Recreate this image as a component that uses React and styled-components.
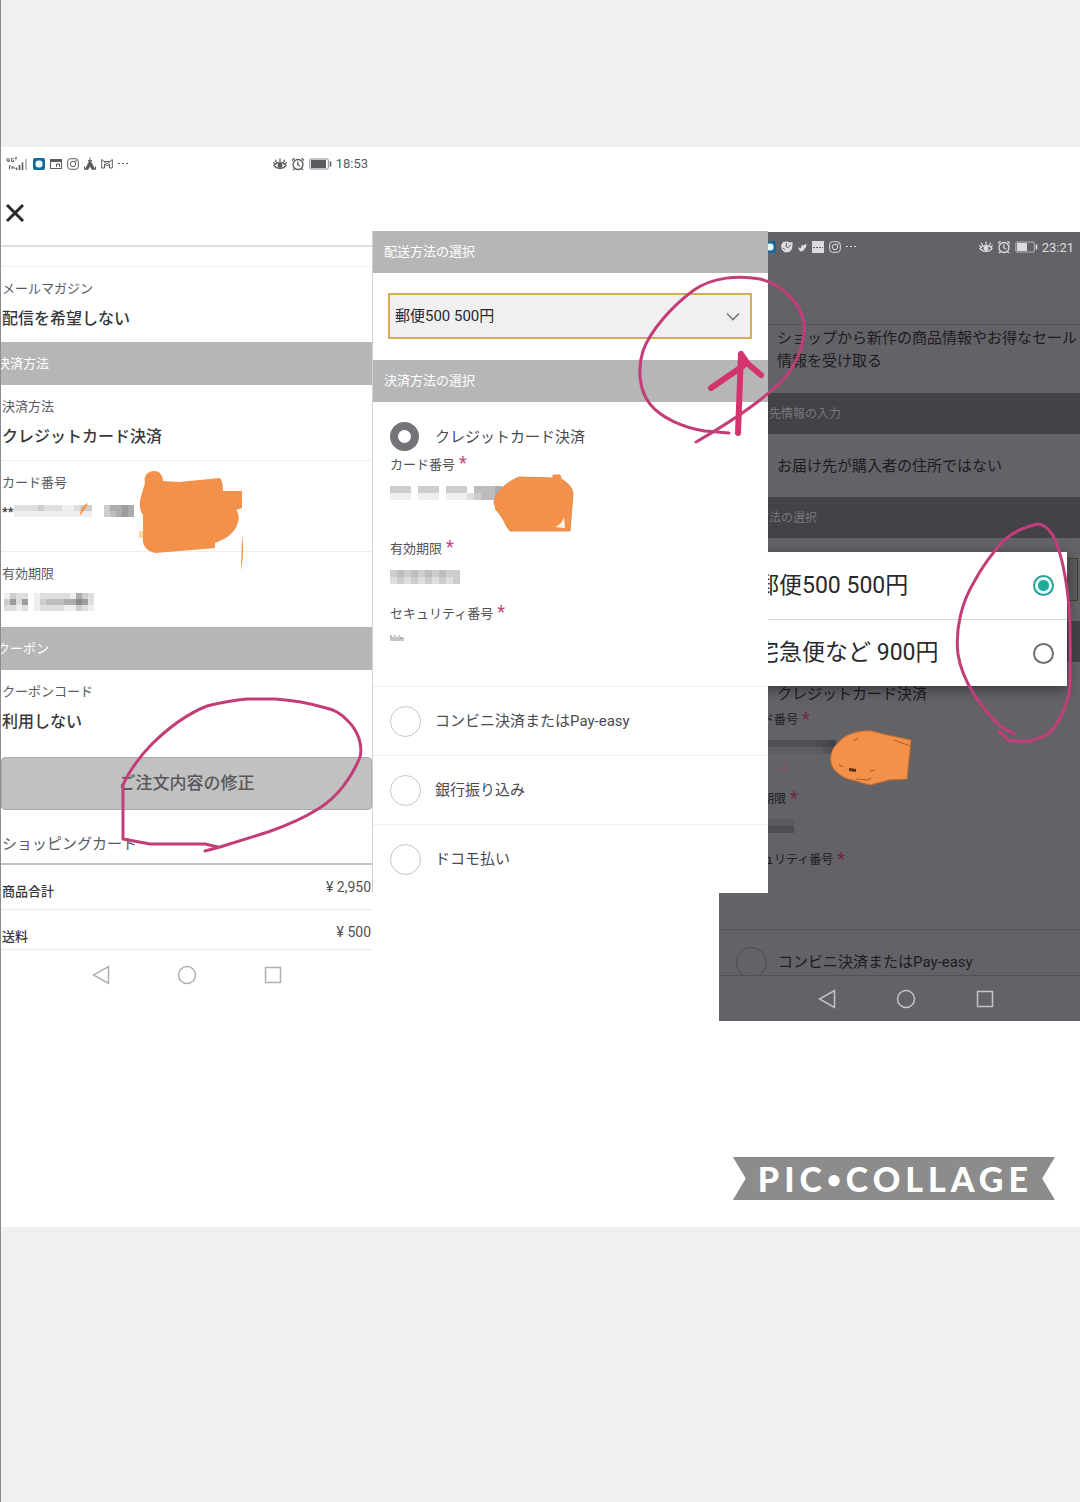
import React from "react"
import styled, { createGlobalStyle } from 'styled-components';


const GlobalStyle = createGlobalStyle`
    * {
        box-sizing: border-box;
    }

    body {
        margin: 0;
        background: #f0f0f0;
        color: #38383c;
        font-family: Roboto, "Noto Sans CJK JP", sans-serif;
    }

    button, select, input {
        margin: 0;
        padding: 0;
        font-family: inherit;
        color: inherit;
    }
`

// each row is a string of darkness levels, 0 = empty
const Mosaic = ({ rows, cell = 7, dark }) => (
    <MosaicStyles
        width={rows[0].length * cell}
        height={rows.length * cell}
        shapeRendering="crispEdges"
        aria-hidden="true"
    >
        {rows.map((row, y) => row.split('').map((level, x) => (
            <rect
                key={`${x}-${y}`}
                x={x * cell}
                y={y * cell}
                width={cell}
                height={cell}
                fill={dark ? '#38373c' : '#5a5a5e'}
                opacity={Number(level) / 10}
            />
        )))}
    </MosaicStyles>
)

const EyeIcon = () => (
    <svg width="14" height="14" viewBox="0 0 15 14" fill="none" stroke="currentColor" strokeWidth="1.3">
        <path d="M1 8.5C4 4.5 11 4.5 14 8.5C11 12.800 4 12.800 1 8.500Z" />
        <circle cx="7.500" cy="8.500" r="2" fill="currentColor" />
        <path d="M7.500 5V1M4 5.600L2.500 2.500M11 5.600L12.500 2.500M1.800 7L.5 5M13.200 7L14.500 5" />
    </svg>
)

const AlarmIcon = () => (
    <svg width="14" height="14" viewBox="0 0 14 14" fill="none" stroke="currentColor" strokeWidth="1.3">
        <circle cx="7" cy="7.500" r="5" />
        <path d="M6.800 4.500V7.700L9.200 9M1 3.500L3.500 1.200M13 3.500L10.500 1.200M3.500 11.500L2 13M10.500 11.500L12 13" />
    </svg>
)

const BatteryIcon = ({ level }) => (
    <svg width="23" height="12" viewBox="0 0 23 12" fill="none" stroke="currentColor">
        <rect x=".8" y="1" width="18.500" height="10" rx="1" opacity=".7" />
        <rect x="2" y="2" width={level} height="8" fill="currentColor" stroke="none" />
        <path d="M21.500 3.500V8.500" strokeWidth="1.600" />
    </svg>
)

const SignalIcon = () => (
    <svg width="22" height="14" viewBox="0 0 22 14" fill="none" stroke="currentColor">
        <path d="M1 1V4H3.500M3 1V5M7.500 1.500H5.500V4.500H7.500V3M9 1H11M10 0V2.500" />
        <path d="M3.500 9V12M3 9H5M6 9.500V12M6 10H8V12" />
        <path d="M10.500 13V10.500M13.500 13V8M16.500 13V5.500" strokeWidth="1.600" />
        <path d="M20 13V2" strokeWidth="1.600" opacity=".5" />
    </svg>
)

const BlueAppIcon = () => (
    <svg width="12" height="12" viewBox="0 0 12 12">
        <rect width="12" height="12" rx="2" fill="#17699c" />
        <rect x="2.500" y="2.500" width="7" height="7" rx="3" fill="#e8fbff" />
    </svg>
)

const WindowIcon = () => (
    <svg width="12" height="12" viewBox="0 0 12 12" fill="none" stroke="currentColor">
        <rect x=".5" y="1.500" width="11" height="9" />
        <path d="M.5 3H11.500" strokeWidth="2" />
        <path d="M6.500 9V6H9.500V9" />
    </svg>
)

const CameraIcon = () => (
    <svg width="12" height="12" viewBox="0 0 12 12" fill="none" stroke="currentColor">
        <rect x=".7" y=".7" width="10.600" height="10.600" rx="3" />
        <circle cx="6" cy="6" r="2.700" />
        <circle cx="9" cy="3" r=".4" />
    </svg>
)

const TentIcon = () => (
    <svg width="12" height="14" viewBox="0 0 12 14" fill="none" stroke="currentColor">
        <path d="M6 3L11 12.500H8L6 9L4 12.500H1Z" fill="currentColor" strokeWidth=".6" />
        <path d="M6 5V.5M4 3L6 5L8 3M.5 9.500V12.500M11.500 9.500V12.500" />
    </svg>
)

const MailIcon = () => (
    <svg width="12" height="11" viewBox="0 0 12 11" fill="none" stroke="currentColor">
        <path d="M.7 10V1.500L6 6L11.300 1.500V10H8.500V6L6 8L3.500 6V10Z" />
        <path d="M3 3.500H9" />
    </svg>
)

const MoreIcon = () => (
    <svg width="10" height="4" viewBox="0 0 10 4" fill="currentColor">
        <rect x="0" y="1" width="2" height="1" />
        <rect x="4" y="1" width="2" height="1" />
        <rect x="8" y="1" width="2" height="1" />
    </svg>
)

const BallIcon = () => (
    <svg width="12" height="12" viewBox="0 0 12 12">
        <path d="M2 1L6 .5L9 1.500L11.500 1V4L11 8L8.500 11L4 11.500L1 9L0 4.500Z" fill="currentColor" />
        <path d="M5.500 2L5 5.500L7 6.500L10 4M2 7L4 8.500" stroke="#636267" fill="none" />
    </svg>
)

const BirdIcon = () => (
    <svg width="9" height="9" viewBox="0 0 9 9">
        <path d="M0 4.500L3 5L4 1.500L5.500 2.500L8.500 .5L8 4L5 8L2 8.500Z" fill="currentColor" />
    </svg>
)

const CardIcon = () => (
    <svg width="12" height="12" viewBox="0 0 12 12">
        <rect width="12" height="12" fill="currentColor" />
        <path d="M1 6.500H11" stroke="#636267" strokeDasharray="2 1" />
    </svg>
)

const SystemNav = ({ dark }) => (
    <NavStyles $dark={dark} aria-label="system">
        <NavButton type="button" aria-label="back">
            <svg width="18" height="20" viewBox="0 0 18 20"><path d="M16.500 1.500V18.500L1.500 10Z" /></svg>
        </NavButton>
        <NavButton type="button" aria-label="home">
            <svg width="20" height="20" viewBox="0 0 20 20"><circle cx="10" cy="10" r="8.500" /></svg>
        </NavButton>
        <NavButton type="button" aria-label="recent">
            <svg width="18" height="18" viewBox="0 0 18 18"><rect x="1.500" y="1.500" width="15" height="15" /></svg>
        </NavButton>
    </NavStyles>
)

const ConfirmScreen = () => (
    <ConfirmStyles>
        <StatusBar>
            <StatusIcons>
                <SignalIcon />
                <BlueAppIcon />
                <WindowIcon />
                <CameraIcon />
                <TentIcon />
                <MailIcon />
                <MoreIcon />
            </StatusIcons>
            <StatusIcons $tight>
                <EyeIcon />
                <AlarmIcon />
                <BatteryIcon level={15} />
                <Clock>18:53</Clock>
            </StatusIcons>
        </StatusBar>
        <CloseBar>
            <CloseButton type="button" aria-label="close">
                <svg width="20" height="20" viewBox="0 0 20 20" fill="none" stroke="#29292d" strokeWidth="3">
                    <path d="M2 2L18 18M18 2L2 18" />
                </svg>
            </CloseButton>
        </CloseBar>
        <Spacer />
        <SummaryRow>
            <SummaryLabel>メールマガジン</SummaryLabel>
            <SummaryValue>配信を希望しない</SummaryValue>
        </SummaryRow>
        <SectionTitle $cropped>決済方法</SectionTitle>
        <SummaryRow $line>
            <SummaryLabel>決済方法</SummaryLabel>
            <SummaryValue>クレジットカード決済</SummaryValue>
        </SummaryRow>
        <SummaryRow $line $tall>
            <SummaryLabel>カード番号</SummaryLabel>
            <SummaryValue>
                <Stars>**</Stars>
                <Mosaic rows={["22223222112330035565", "11111111111110034565"]} cell={6} />
            </SummaryValue>
        </SummaryRow>
        <SummaryRow>
            <SummaryLabel>有効期限</SummaryLabel>
            <SummaryValue>
                <MosaicInset>
                    <Mosaic rows={["132201222221532", "362601344455762", "221201222211321"]} cell={6} />
                </MosaicInset>
            </SummaryValue>
        </SummaryRow>
        <SectionTitle $cropped>クーポン</SectionTitle>
        <SummaryRow>
            <SummaryLabel>クーポンコード</SummaryLabel>
            <SummaryValue>利用しない</SummaryValue>
        </SummaryRow>
        <EditButton type="button">ご注文内容の修正</EditButton>
        <CartTitle>ショッピングカート</CartTitle>
        <TotalTable>
            <tbody>
                <tr>
                    <th scope="row">商品合計</th>
                    <td>¥ 2,950</td>
                </tr>
                <tr>
                    <th scope="row">送料</th>
                    <td>¥ 500</td>
                </tr>
            </tbody>
        </TotalTable>
        <SystemNav />
    </ConfirmStyles>
)

const PaymentScreen = () => (
    <PaymentStyles>
        <SectionTitle>配送方法の選択</SectionTitle>
        <SelectBox>
            <select aria-label="配送方法の選択" defaultValue="post">
                <option value="post">郵便500 500円</option>
                <option value="parcel">宅急便など 900円</option>
            </select>
            <svg width="14" height="9" viewBox="0 0 14 9" fill="none" stroke="#77777b" strokeWidth="1.600">
                <path d="M1 1.500L7 7.500L13 1.500" />
            </svg>
        </SelectBox>
        <SectionTitle>決済方法の選択</SectionTitle>
        <CardOption>
            <OptionLabel>
                <Radio type="radio" name="payment" defaultChecked />
                クレジットカード決済
            </OptionLabel>
            <Field $tall>
                <FieldLabel>カード番号<Required>*</Required></FieldLabel>
                <Mosaic rows={["3330333033304445", "1110111011123445"]} />
            </Field>
            <Field>
                <FieldLabel>有効期限<Required>*</Required></FieldLabel>
                <Mosaic rows={["3434343433", "2323232323"]} />
            </Field>
            <Field $tall>
                <FieldLabel>セキュリティ番号<Required>*</Required></FieldLabel>
                <Mosaic rows={["4030300", "4434353", "3343434"]} cell={2} />
            </Field>
        </CardOption>
        <Option>
            <OptionLabel><Radio type="radio" name="payment" />コンビニ決済またはPay-easy</OptionLabel>
        </Option>
        <Option>
            <OptionLabel><Radio type="radio" name="payment" />銀行振り込み</OptionLabel>
        </Option>
        <Option>
            <OptionLabel><Radio type="radio" name="payment" />ドコモ払い</OptionLabel>
        </Option>
    </PaymentStyles>
)

const DialogScreen = () => (
    <DialogScreenStyles>
        <StatusBar $dark>
            <StatusIcons>
                <BlueAppIcon />
                <BallIcon />
                <BirdIcon />
                <CardIcon />
                <CameraIcon />
                <MoreIcon />
            </StatusIcons>
            <StatusIcons $tight>
                <EyeIcon />
                <AlarmIcon />
                <BatteryIcon level={10} />
                <Clock>23:21</Clock>
            </StatusIcons>
        </StatusBar>
        <DimHeader />
        <DimText>ショップから新作の商品情報やお得なセール<br />情報を受け取る</DimText>
        <DimTitle>お届け先情報の入力</DimTitle>
        <DimRow>お届け先が購入者の住所ではない</DimRow>
        <DimTitle>配送方法の選択</DimTitle>
        <DimSelect><div /></DimSelect>
        <DimTitle />
        <DimCard>
            <DimCardTitle>クレジットカード決済</DimCardTitle>
            <DimField $tall>
                <FieldLabel>カード番号<Required $dark>*</Required></FieldLabel>
                <Mosaic dark rows={["44444444444567", "11111111111134"]} />
            </DimField>
            <DimField>
                <FieldLabel>有効期限<Required $dark>*</Required></FieldLabel>
                <Mosaic dark rows={["22222222", "55555555"]} />
            </DimField>
            <DimField $tall>
                <FieldLabel>セキュリティ番号<Required $dark>*</Required></FieldLabel>
            </DimField>
        </DimCard>
        <DimOption>
            <Radio type="radio" name="dimmed" $dark />
            コンビニ決済またはPay-easy
        </DimOption>
        <SystemNav dark />
        <Dialog role="dialog" aria-label="配送方法の選択">
            <DialogOption>
                郵便500 500円
                <DialogRadio type="radio" name="delivery" defaultChecked />
            </DialogOption>
            <DialogOption>
                宅急便など 900円
                <DialogRadio type="radio" name="delivery" />
            </DialogOption>
        </Dialog>
    </DialogScreenStyles>
)

// hand drawn marks: circles, arrow and the orange cover-ups
const Doodles = () => (
    <DoodleStyles viewBox="1 147 1079 1080" preserveAspectRatio="none" aria-hidden="true">
        <g fill="#f3914a">
            <path d="M145 483C143 475 149 471 154 471C160 471 163 476 163 481L179 482L220 478C223 482 223 487 223 491H242V508L236 510C240 514 239 520 237 525C234 534 225 539 215 543V548L204 549L155 553C147 551 143 546 143 541V515C138 508 140 499 142 493Z" />
            <path d="M80 516C80 510 83 505 88 503C86 508 83 511 80 516Z" />
            <path d="M242 535C244 547 243 561 241 571C241 560 242 547 242 535Z" />
            <path d="M139 531H143V538H139Z" fill="#f8d8a0" />
            <path d="M494 502C496 491 507 482 519 477L553 478V475H560L561 479C567 482 573 488 573 494L570 531H510L507 527C504 520 500 514 496 510Z" stroke="#dc8f48" />
            <path d="M555 527C560 525 563 521 564 517L565 528Z" fill="#fff9ec" />
            <path d="M831 762C830 755 832 748 838 743C844 735 857 730 872 731L883 734L911 740L907 779L889 780L870 785L845 778C837 773 832 769 831 762Z" stroke="#c56d2c" />
            <path d="M894 740L910 746M853 741L858 738M856 779L868 780L871 778M870 771L875 770M839 765L843 767" fill="none" stroke="#a65d26" />
            <path d="M849 768L856 769V772L849 771Z" fill="#5b3411" />
        </g>
        <g fill="none" stroke="#c33d79" strokeWidth="3" strokeLinecap="round" strokeLinejoin="round">
            <path d="M205 851L220 847L268 832C288 825 304 818 318 809C337 798 352 777 360 757C363 745 358 731 348 721C342 714 333 709 326 708C309 703 291 700 275 699H247C234 700 219 703 207 706C187 714 166 730 151 745C140 756 128 773 123 785V839L150 844L205 844L218 847" />
            <path d="M729 433L705 431C684 428 661 418 650 404C638 389 638 366 643 351C650 331 672 306 694 290C713 277 739 275 760 279C781 284 800 302 804 322C806 346 793 374 773 389C752 408 727 424 696 442" />
            <path d="M1014 734L1000 726C983 710 962 682 958 654C955 628 962 602 974 582C983 565 995 550 1004 540C1016 530 1026 527 1037 524C1045 524 1052 532 1055 540C1063 558 1067 585 1069 607C1071 633 1070 665 1070 684C1069 707 1055 730 1046 735C1032 743 1018 742 1008 740L999 731" />
        </g>
        <path d="M738 433L741 354M711 388L743 366M741 354L748 364L761 375" fill="none" stroke="#d4346d" strokeWidth="6" strokeLinecap="round" strokeLinejoin="round" />
        <circle cx="784" cy="768" r="2" fill="#ad4b72" />
    </DoodleStyles>
)

export default function App() {
    return (
        <Page>
            <GlobalStyle />
            <Collage>
                <ConfirmScreen />
                <PaymentScreen />
                <DialogScreen />
                <Banner>PIC<Dot>•</Dot>COLLAGE</Banner>
                <Doodles />
            </Collage>
        </Page>
    )
}

const Page = styled.main`
    min-height: 100vh;
    padding-top: 147px;
    border-left: 1px solid #8c8c8c;
`

const Collage = styled.div`
    position: relative;
    display: grid;
    grid-template-columns: 371fr 347fr 49fr 312fr;
    align-items: start;
    padding-bottom: 27px;
    overflow: hidden;
    background: #fff;
`

const ConfirmStyles = styled.section`
    grid-area: 1 / 1;
    min-width: 0;
    overflow: hidden;
`

const PaymentStyles = styled.section`
    grid-area: 1 / 2 / 2 / 4;
    z-index: 1;
    min-width: 0;
    margin-top: 84px;
    border-left: 1px solid #d2d2d2;
    background: #fff;
`

const DialogScreenStyles = styled.section`
    position: relative;
    grid-area: 1 / 3 / 2 / 5;
    min-width: 0;
    margin-top: 85px;
    background: #636267;
    color: #1d1c21;
`

const StatusBar = styled.div`
    display: flex;
    align-items: center;
    justify-content: space-between;
    height: ${({ $dark }) => $dark ? '30px' : '33px'};
    padding: ${({ $dark }) => $dark ? '0 6px 0 45px' : '0 4px 0 5px'};
    color: ${({ $dark }) => $dark ? '#dcdcde' : '#5b5b5f'};
`

const StatusIcons = styled.div`
    display: flex;
    align-items: center;
    gap: ${({ $tight }) => $tight ? '4px' : '5px'};
`

const Clock = styled.span`
    font-size: 13px;
`

const CloseBar = styled.div`
    display: flex;
    align-items: center;
    height: 67px;
    padding-left: 4px;
    border-bottom: 2px solid #dedede;
`

const CloseButton = styled.button`
    display: flex;
    border: 0;
    background: none;
`

const Spacer = styled.div`
    height: 20px;
    border-bottom: 1px solid #f0f0f0;
`

const SectionTitle = styled.h2`
    display: flex;
    align-items: center;
    height: ${({ $cropped }) => $cropped ? '43px' : '42px'};
    margin: 0;
    padding-bottom: 3px;
    padding-left: ${({ $cropped }) => $cropped ? '0' : '11px'};
    text-indent: ${({ $cropped }) => $cropped ? '-4px' : '0'};
    background: #b6b6b6;
    color: #fff;
    font-size: 13px;
    font-weight: 400;
`

const SummaryRow = styled.div`
    box-sizing: content-box;
    min-height: ${({ $tall }) => $tall ? '73px' : '58px'};
    padding: 10px 1px 7px;
    border-bottom: ${({ $line }) => $line ? '1px solid #ededed' : '0'};
`

const SummaryLabel = styled.div`
    color: #59595d;
    font-size: 13px;
    line-height: 24px;
`

const SummaryValue = styled.div`
    display: flex;
    align-items: center;
    height: 32px;
    font-size: 16px;
    font-weight: 500;
`

const Stars = styled.span`
    font-size: 13px;
`

const MosaicStyles = styled.svg`
    display: block;
    flex: none;
`

const MosaicInset = styled.div`
    padding-left: 2px;
`

const EditButton = styled.button`
    display: block;
    width: 100%;
    height: 53px;
    margin-top: 12px;
    padding-bottom: 4px;
    border: 1px solid #aaa;
    border-radius: 4px;
    background: #c1c1c1;
    color: #58585c;
    font-size: 17px;
    font-weight: 500;
`

const CartTitle = styled.h2`
    margin: 0;
    padding: 15px 1px 0;
    border-bottom: 2px solid #c4c4c4;
    color: #59595d;
    font-size: 15px;
    font-weight: 400;
    line-height: 38px;
`

const TotalTable = styled.table`
    width: 100%;
    border-collapse: collapse;
    line-height: 18px;

    tr {
        border-bottom: 1px solid #ebebeb;
    }

    th {
        padding: 18px 1px 8px;
        font-size: 13px;
        font-weight: 500;
        text-align: left;
    }

    td {
        padding: 13px 1px;
        color: #505054;
        font-size: 14px;
        text-align: right;
        vertical-align: top;
    }

    tr:last-child th {
        padding-bottom: 3px;
    }

    tr:last-child td {
        padding-bottom: 8px;
    }
`

const NavStyles = styled.nav`
    display: flex;
    align-items: center;
    justify-content: center;
    gap: ${({ $dark }) => $dark ? '60px' : '67px'};
    height: ${({ $dark }) => $dark ? '46px' : '50px'};
    padding-left: ${({ $dark }) => $dark ? '13px' : '0'};
    border-top: ${({ $dark }) => $dark ? '1px solid #515055' : '0'};
    color: ${({ $dark }) => $dark ? '#c4c4c7' : '#b0b0b0'};
`

const NavButton = styled.button`
    display: flex;
    border: 0;
    background: none;

    svg {
        fill: none;
        stroke: currentColor;
        stroke-width: 1.5;
    }
`

const SelectBox = styled.div`
    display: grid;
    align-items: center;
    padding: 20px 16px 21px 15px;

    select, svg {
        grid-area: 1 / 1;
    }

    select {
        width: 100%;
        height: 46px;
        padding-left: 5px;
        appearance: none;
        border: 2px solid #d2ae55;
        border-radius: 0;
        background: #f0f0f0;
        color: #29292d;
        font-size: 15px;
    }

    svg {
        justify-self: end;
        margin-right: 12px;
        pointer-events: none;
    }
`

const Radio = styled.input`
    flex: none;
    width: 31px;
    height: 31px;
    appearance: none;
    border: 1px solid ${({ $dark }) => $dark ? '#4c4b50' : '#c6c6c6'};
    border-radius: 50%;

    &:checked {
        width: 29px;
        height: 29px;
        margin-right: 2px;
        border: 8px solid #747478;
    }
`

const CardOption = styled.div`
    padding: 18px 17px 0;
`

const OptionLabel = styled.label`
    display: flex;
    align-items: center;
    gap: 14px;
    height: 33px;
    color: #4b4b4f;
    font-size: 15px;
    line-height: 22px;
`

const Option = styled.div`
    display: flex;
    align-items: center;
    height: 69px;
    padding: 0 17px;
    border-top: 1px solid #eeefef;
`

const Field = styled.div`
    min-height: ${({ $tall }) => $tall ? '84px' : '65px'};

    svg {
        margin-top: 10px;
    }
`

const FieldLabel = styled.div`
    display: flex;
    gap: 4px;
    color: #515155;
    font-size: 13px;
    line-height: 23px;
`

const Required = styled.span`
    color: ${({ $dark }) => $dark ? '#702441' : '#c64679'};
    font-size: 18px;
    line-height: 20px;
`

const DimHeader = styled.div`
    height: 63px;
    border-bottom: 1px solid #56555a;
`

const DimText = styled.p`
    height: 68px;
    margin: 0;
    padding: 2px 0 0 58px;
    font-size: 15px;
    line-height: 23px;
    white-space: nowrap;
`

const DimTitle = styled.h2`
    display: flex;
    align-items: center;
    height: 41px;
    margin: 0;
    padding: 0 0 2px 14px;
    background: #434246;
    color: #77767b;
    font-size: 12px;
    font-weight: 400;
`

const DimRow = styled.div`
    display: flex;
    align-items: center;
    height: 63px;
    padding: 0 0 2px 58px;
    font-size: 15px;
`

const DimSelect = styled.div`
    padding: 20px 2px 20px 16px;

    div {
        height: 43px;
        border: 1px solid #4b3c2c;
        background: #5b5a5e;
    }
`

const DimCard = styled.div`
    height: 268px;
    padding: 21px 0 0 19px;
    border-bottom: 1px solid #57565b;
`

const DimCardTitle = styled.div`
    padding: 0 0 4px 39px;
    font-size: 15px;
    line-height: 22px;
`

const DimField = styled.div`
    min-height: ${({ $tall }) => $tall ? '79px' : '61px'};

    ${FieldLabel} {
        color: inherit;
        font-size: 12px;
    }

    svg {
        margin-top: 8px;
    }
`

const DimOption = styled.label`
    display: flex;
    gap: 11px;
    height: 45px;
    padding: 17px 0 0 17px;
    overflow: hidden;
    font-size: 15px;
    line-height: 30px;
`

const Dialog = styled.div`
    position: absolute;
    top: 320px;
    right: 13px;
    left: 0;
    background: #fff;
    box-shadow: 0 3px 12px rgba(0, 0, 0, 0.45);
`

const DialogOption = styled.label`
    display: flex;
    align-items: center;
    justify-content: space-between;
    height: 67px;
    padding: 0 13px 0 37px;
    color: #29292d;
    font-size: 23px;
    line-height: 24px;

    & + & {
        border-top: 1px solid #d8d8d8;
    }
`

const DialogRadio = styled.input`
    width: 21px;
    height: 21px;
    appearance: none;
    border: 2px solid #6d6d71;
    border-radius: 50%;

    &:checked {
        border-color: #2b9f97;
        background: radial-gradient(circle, #20aaa0 5px, #e2fffc 6px);
    }
`

const Banner = styled.div`
    grid-area: 2 / 1 / 3 / 5;
    display: flex;
    align-items: center;
    justify-self: end;
    height: 43px;
    margin: 136px 25px 0 0;
    padding: 0 22px 0 25px;
    background: #8c8c8c;
    clip-path: polygon(0 0, 100% 0, 96% 50%, 100% 100%, 0 100%, 4% 50%);
    color: #fff;
    font-family: Lato, sans-serif;
    font-size: 34px;
    font-weight: 900;
    line-height: 43px;
    letter-spacing: 5px;
`

const Dot = styled.span`
    font-size: 24px;
`

const DoodleStyles = styled.svg`
    position: absolute;
    inset: 0;
    z-index: 2;
    width: 100%;
    height: 100%;
    pointer-events: none;
`
